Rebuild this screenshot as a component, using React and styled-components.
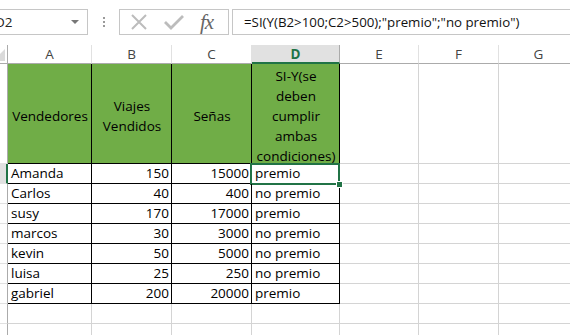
import styled, { createGlobalStyle, css } from 'styled-components'

const GlobalStyle = createGlobalStyle`
  html, body {
    margin: 0;
    background: #ffffff;
    font-family: "Open Sans", "Liberation Sans", sans-serif;
    overflow: hidden;
  }
`

const Page = styled.div`
  width: 570px;
  height: 335px;
  overflow: hidden;
`

const Toolbar = styled.div`
  display: flex;
  align-items: flex-start;
  height: 45px;
  padding-top: 9px;
  box-sizing: border-box;
`

const NameBox = styled.div`
  width: 88px;
  height: 26px;
  box-sizing: border-box;
  border: 1px solid #c6c6c6;
  border-left: none;
  display: flex;
  align-items: center;
  justify-content: space-between;
  overflow: hidden;
  padding-right: 8px;
`

const NameText = styled.span`
  margin-left: -5px;
  font-size: 13.5px;
  color: #222;
`

const Caret = styled.span`
  width: 0;
  height: 0;
  border-left: 4px solid transparent;
  border-right: 4px solid transparent;
  border-top: 4px solid #777;
`

const Grip = styled.div`
  width: 31px;
  height: 26px;
  display: flex;
  flex-direction: column;
  align-items: center;
  justify-content: center;
  gap: 2px;
  span {
    width: 2px;
    height: 2px;
    background: #9a9a9a;
  }
`

const FxBox = styled.div`
  width: 110px;
  height: 26px;
  box-sizing: border-box;
  border: 1px solid #c6c6c6;
  display: flex;
  align-items: center;
  padding-left: 10px;
  gap: 16px;
`

const FxLabel = styled.span`
  font-family: "Liberation Serif", "DejaVu Serif", serif;
  font-style: italic;
  font-size: 21px;
  color: #666;
  letter-spacing: -1px;
  line-height: 1;
`

const FormulaBox = styled.div`
  flex: 1;
  margin-left: 3px;
  height: 26px;
  box-sizing: border-box;
  border: 1px solid #c6c6c6;
  border-right: none;
  display: flex;
  align-items: center;
  padding-left: 11px;
  font-size: 13.3px;
  color: #111;
  white-space: nowrap;
`

const Sheet = styled.div`
  display: grid;
  grid-template-columns: 8px 84px 80px 80px 88px 79px 80px 80px;
  grid-template-rows: 19px 100px repeat(9, 20px);
`

const ColHead = styled.div`
  box-sizing: border-box;
  border-right: 1px solid #e1e1e1;
  border-bottom: 1px solid #ababab;
  display: flex;
  align-items: center;
  justify-content: center;
  font-size: 13.5px;
  color: #444;
  background: #ffffff;
  ${(p) =>
    p.$active &&
    css`
      background: #e1e1e1;
      color: #217346;
      font-weight: 700;
      border-bottom: 2px solid #217346;
      border-right: 1px solid #ababab;
    `}
`

const Corner = styled.div`
  box-sizing: border-box;
  border-right: 1px solid #ababab;
  border-bottom: 1px solid #ababab;
  position: relative;
  overflow: hidden;
  &::after {
    content: '';
    position: absolute;
    right: 2px;
    bottom: 2px;
    border-left: 12px solid transparent;
    border-bottom: 12px solid #dadada;
  }
`

const RowHead = styled.div`
  box-sizing: border-box;
  border-right: 1px solid #ababab;
  border-bottom: 1px solid #e1e1e1;
  background: #ffffff;
  ${(p) =>
    p.$active &&
    css`
      background: #e1e1e1;
      border-right: 2px solid #217346;
    `}
`

const Cell = styled.div`
  box-sizing: border-box;
  border-right: 1px solid #d4d4d4;
  border-bottom: 1px solid #d4d4d4;
  font-size: 13.5px;
  color: #000;
  display: flex;
  align-items: flex-end;
  padding: 0 2px 0 3px;
  line-height: 19px;
  white-space: nowrap;
  position: relative;
  justify-content: ${(p) => (p.$num ? 'flex-end' : 'flex-start')};
  ${(p) =>
    p.$boxed &&
    css`
      border-right-color: #000;
      border-bottom-color: #000;
    `}
  ${(p) =>
    p.$title &&
    css`
      background: #70ad47;
      align-items: center;
      justify-content: center;
      text-align: center;
      line-height: 20px;
      padding-top: 4px;
      overflow: visible;
    `}
  ${(p) =>
    p.$selected &&
    css`
      &::after {
        content: '';
        position: absolute;
        left: -2px;
        top: -1px;
        right: -1px;
        bottom: -2px;
        border: 2px solid #217346;
      }
      &::before {
        content: '';
        position: absolute;
        right: -4px;
        bottom: -5px;
        width: 5px;
        height: 5px;
        background: #217346;
        border: 1px solid #fff;
        z-index: 2;
      }
    `}
`

function XIcon() {
  return (
    <svg width="18" height="16" viewBox="0 0 18 16">
      <path d="M2 1 L16 15 M16 1 L2 15" stroke="#bcbcbc" strokeWidth="2" fill="none" />
    </svg>
  )
}

function CheckIcon() {
  return (
    <svg width="20" height="16" viewBox="0 0 20 16">
      <path d="M1 8 L7 14 L19 2" stroke="#bcbcbc" strokeWidth="2.8" fill="none" />
    </svg>
  )
}

const columns = ['A', 'B', 'C', 'D', 'E', 'F', 'G']

const vendedores = [
  ['Amanda', 150, 15000, 'premio'],
  ['Carlos', 40, 400, 'no premio'],
  ['susy', 170, 17000, 'premio'],
  ['marcos', 30, 3000, 'no premio'],
  ['kevin', 50, 5000, 'no premio'],
  ['luisa', 25, 250, 'no premio'],
  ['gabriel', 200, 20000, 'premio'],
]

export default function App() {
  return (
    <Page>
      <GlobalStyle />
      <Toolbar>
        <NameBox>
          <NameText>D2</NameText>
          <Caret />
        </NameBox>
        <Grip>
          <span />
          <span />
          <span />
        </Grip>
        <FxBox>
          <XIcon />
          <CheckIcon />
          <FxLabel>fx</FxLabel>
        </FxBox>
        <FormulaBox>=SI(Y(B2&gt;100;C2&gt;500);"premio";"no premio")</FormulaBox>
      </Toolbar>

      <Sheet>
        <Corner />
        {columns.map((c) => (
          <ColHead key={c} $active={c === 'D'}>
            {c}
          </ColHead>
        ))}

        <RowHead />
        <Cell $title $boxed>Vendedores</Cell>
        <Cell $title $boxed>
          <div>
            Viajes
            <br />
            Vendidos
          </div>
        </Cell>
        <Cell $title $boxed>Señas</Cell>
        <Cell $title $boxed>
          <div>
            SI-Y(se
            <br />
            deben
            <br />
            cumplir
            <br />
            ambas
            <br />
            condiciones)
          </div>
        </Cell>
        <Cell />
        <Cell />
        <Cell />

        {vendedores.map(([nombre, viajes, senas, resultado], i) => (
          <>
            <RowHead key={`h${i}`} $active={i === 0} />
            <Cell key={`a${i}`} $boxed>{nombre}</Cell>
            <Cell key={`b${i}`} $boxed $num>{viajes}</Cell>
            <Cell key={`c${i}`} $boxed $num>{senas}</Cell>
            <Cell key={`d${i}`} $boxed $selected={i === 0}>{resultado}</Cell>
            <Cell key={`e${i}`} />
            <Cell key={`f${i}`} />
            <Cell key={`g${i}`} />
          </>
        ))}

        {[0, 1].map((r) => (
          <>
            <RowHead key={`eh${r}`} />
            {columns.map((c) => (
              <Cell key={`e${r}${c}`} />
            ))}
          </>
        ))}
      </Sheet>
    </Page>
  )
}
